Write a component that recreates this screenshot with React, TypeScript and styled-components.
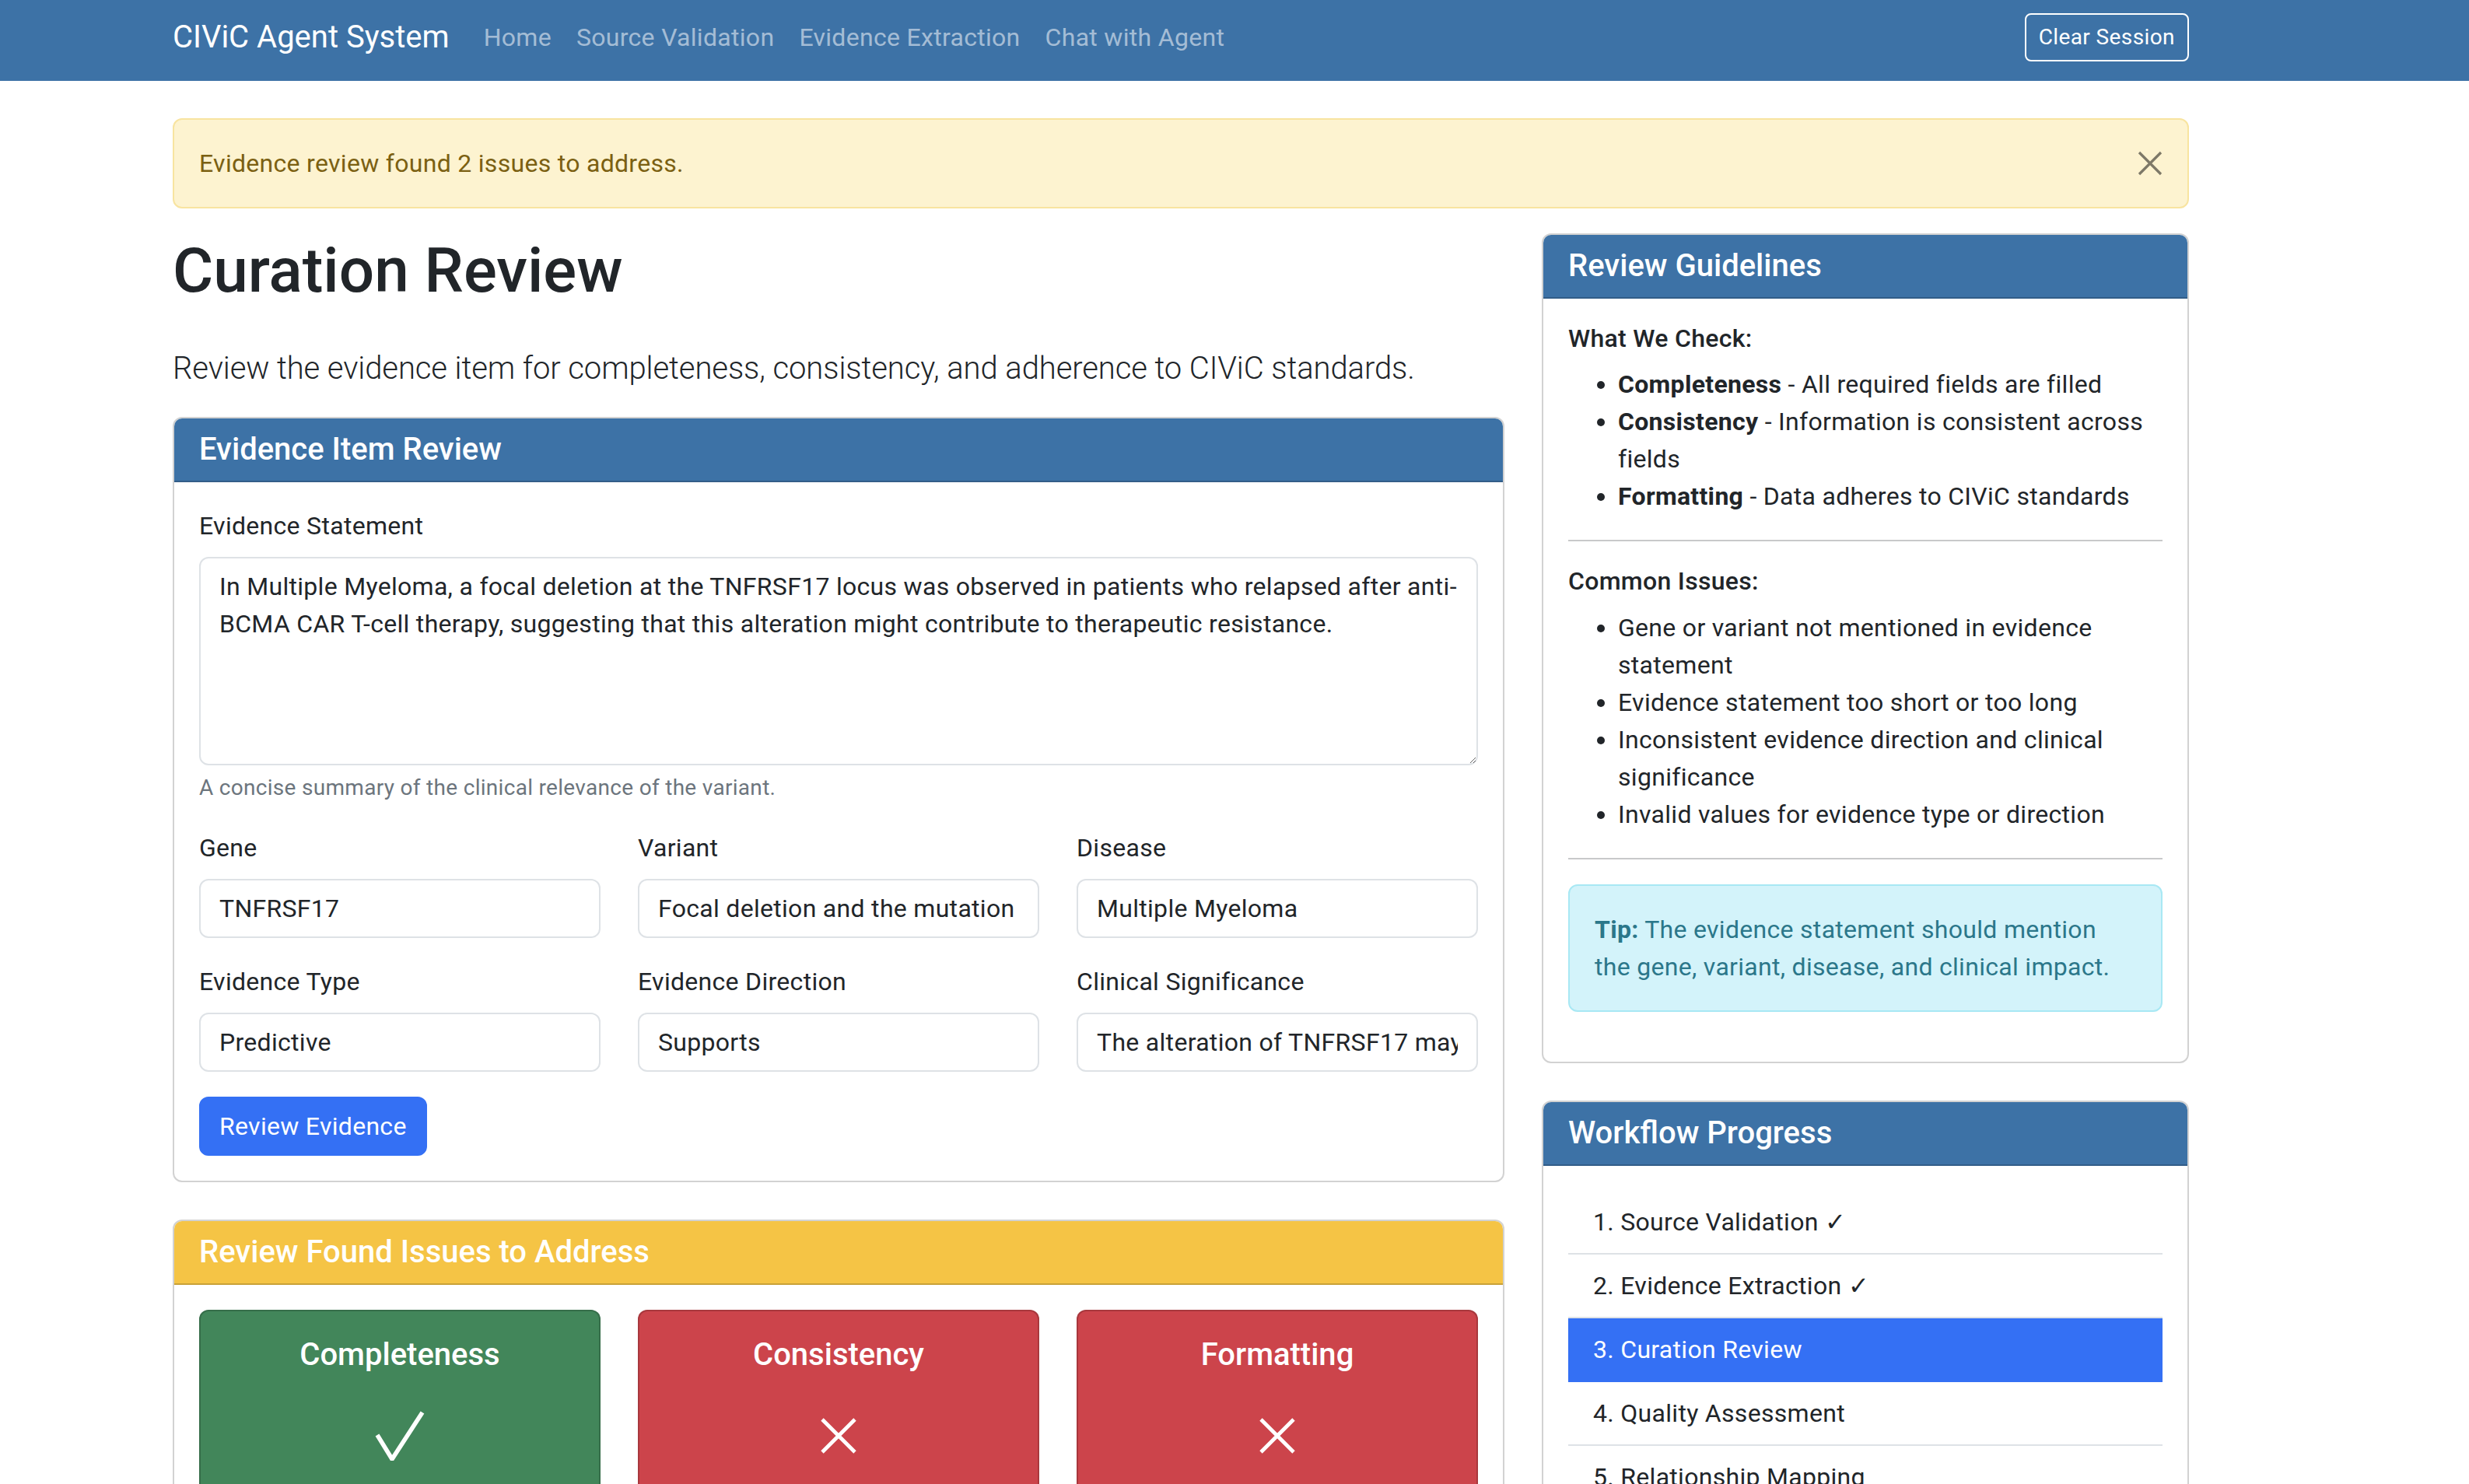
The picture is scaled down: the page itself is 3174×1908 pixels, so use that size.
import React from 'react';
import styled, { createGlobalStyle, css } from 'styled-components';

const GlobalStyle = createGlobalStyle`
  body {
    margin: 0;
    zoom: 2;
    background: #fff;
    color: #212529;
    font-family: Roboto, "Liberation Sans", "Noto Sans", sans-serif;
    font-size: 16px;
    line-height: 1.5;
    letter-spacing: 0.15px;
  }
  * { box-sizing: border-box; }
`;

const BLUE_HEADER = '#3d72a6';
const PRIMARY = '#3470f4';

const Navbar = styled.nav`
  background: ${BLUE_HEADER};
  height: 52px;
  display: flex;
  align-items: center;
  padding-bottom: 4px;
`;

const NavInner = styled.div`
  width: 1296px;
  margin-left: 111px;
  display: flex;
  align-items: center;
`;

const Brand = styled.a`
  font-size: 20px;
  line-height: 30px;
  letter-spacing: 0;
  color: #fff;
  margin-right: 14px;
  text-decoration: none;
`;

const NavLink = styled.a`
  color: rgba(255, 255, 255, 0.55);
  padding: 8px;
  font-size: 16px;
  line-height: 24px;
  text-decoration: none;
`;

const ClearButton = styled.button`
  margin-left: auto;
  font-family: inherit;
  font-size: 14px;
  line-height: 21px;
  letter-spacing: 0.2px;
  padding: 4px 8px;
  border: 1px solid #fff;
  border-radius: 4px;
  background: transparent;
  color: #fff;
`;

const Page = styled.main`
  width: 1296px;
  margin: 24px 0 0 111px;
`;

const Alert = styled.div<{ $tone: 'warning' | 'info' }>`
  display: flex;
  align-items: center;
  justify-content: space-between;
  padding: 16px;
  border-radius: 6px;
  margin-bottom: 16px;
  ${({ $tone }) =>
    $tone === 'warning'
      ? css`
          background: #fdf3d0;
          border: 1px solid #f8e4a0;
          color: #7b6012;
        `
      : css`
          background: #d3f3fa;
          border: 1px solid #a8e8f4;
          color: #2b778a;
        `}
`;

const CloseButton = styled.button`
  background: none;
  border: none;
  padding: 0;
  width: 16px;
  height: 16px;
  display: flex;
  align-items: center;
  justify-content: center;
  opacity: 0.5;
`;

const Columns = styled.div`
  display: grid;
  grid-template-columns: 856px 416px;
  column-gap: 24px;
  align-items: start;
`;

const Title = styled.h1`
  margin: 0 0 24px;
  font-size: 40px;
  font-weight: 500;
  line-height: 1.2;
  letter-spacing: 0;
`;

const Lead = styled.p`
  margin: 0 0 16px;
  font-size: 20px;
  font-weight: 300;
  line-height: 30px;
  letter-spacing: -0.05px;
`;

const Card = styled.section`
  background: #fff;
  border: 1px solid rgba(0, 0, 0, 0.175);
  border-radius: 6px;
  overflow: hidden;
  margin-bottom: 24px;
`;

const CardHeader = styled.div<{ $tone?: 'primary' | 'warning' }>`
  background: ${({ $tone }) => ($tone === 'warning' ? '#f5c445' : BLUE_HEADER)};
  border-bottom: 1px solid rgba(0, 0, 0, 0.175);
  padding: 8px 16px;
  color: #fff;

  h5 {
    margin: 0;
    font-size: 20px;
    font-weight: 500;
    line-height: 24px;
    letter-spacing: 0;
  }
`;

const CardBody = styled.div`
  padding: 16px;
`;

const FieldGroup = styled.div`
  margin-bottom: 16px;
`;

const Label = styled.label`
  display: block;
  margin-bottom: 8px;
  font-size: 16px;
  line-height: 24px;
`;

const TextArea = styled.textarea`
  display: block;
  width: 100%;
  padding: 6px 12px;
  font-family: inherit;
  font-size: 16px;
  line-height: 24px;
  letter-spacing: 0.15px;
  color: #212529;
  border: 1px solid #dee2e6;
  border-radius: 6px;
  resize: vertical;
`;

const Help = styled.div`
  margin-top: 4px;
  font-size: 14px;
  line-height: 21px;
  color: #6c757d;
`;

const Grid3 = styled.div`
  display: grid;
  grid-template-columns: repeat(3, minmax(0, 1fr));
  column-gap: 24px;
`;

const Input = styled.input`
  display: block;
  width: 100%;
  height: 38px;
  padding: 6px 12px;
  font-family: inherit;
  font-size: 16px;
  line-height: 24px;
  letter-spacing: 0.15px;
  color: #212529;
  border: 1px solid #dee2e6;
  border-radius: 6px;
`;

const PrimaryButton = styled.button`
  font-family: inherit;
  font-size: 16px;
  line-height: 24px;
  letter-spacing: 0.15px;
  padding: 6px 12px;
  color: #fff;
  background: ${PRIMARY};
  border: 1px solid ${PRIMARY};
  border-radius: 6px;
`;

const IssueCard = styled.div<{ $ok: boolean }>`
  background: ${({ $ok }) => ($ok ? '#42865a' : '#cc444b')};
  border: 1px solid rgba(0, 0, 0, 0.175);
  border-radius: 6px;
  color: #fff;
  padding: 16px;
  text-align: center;
  min-height: 160px;

  h5 {
    margin: 0 0 8px;
    font-size: 20px;
    font-weight: 500;
    line-height: 24px;
    letter-spacing: 0;
  }
`;

const IssueIcon = styled.div`
  height: 64px;
  display: flex;
  align-items: center;
  justify-content: center;
`;

const SubTitle = styled.h6`
  margin: 0 0 8px;
  font-size: 16px;
  font-weight: 500;
  line-height: 1.2;
`;

const BulletList = styled.ul`
  margin: 0 0 16px;
  padding-left: 32px;

  li {
    line-height: 24px;
  }
`;

const Divider = styled.hr`
  margin: 16px 0;
  border: 0;
  border-top: 1px solid #c8c9ca;
`;

const StepList = styled.ul`
  list-style: none;
  margin: 0;
  padding: 0;
`;

const StepItem = styled.li<{ $active?: boolean }>`
  padding: 8px 16px;
  line-height: 24px;
  border-bottom: 1px solid #dee2e6;
  ${({ $active }) =>
    $active &&
    css`
      background: ${PRIMARY};
      border-color: ${PRIMARY};
      color: #fff;
    `}
`;

const CheckIcon = () => (
  <svg width="32" height="32" viewBox="0 0 32 32" fill="none">
    <path d="M1.5 15.5 L11 31 L30.5 1" stroke="#fff" strokeWidth="2.8" strokeLinejoin="miter" />
  </svg>
);

const CrossIcon = () => (
  <svg width="24" height="24" viewBox="0 0 24 24" fill="none">
    <path d="M1.5 1.5 L22.5 22.5 M22.5 1.5 L1.5 22.5" stroke="#fff" strokeWidth="2.4" />
  </svg>
);

const issues = [
  { name: 'Completeness', ok: true },
  { name: 'Consistency', ok: false },
  { name: 'Formatting', ok: false },
];

const steps = [
  '1. Source Validation ✓',
  '2. Evidence Extraction ✓',
  '3. Curation Review',
  '4. Quality Assessment',
  '5. Relationship Mapping',
];

const statement =
  'In Multiple Myeloma, a focal deletion at the TNFRSF17 locus was observed in patients who relapsed after anti-BCMA CAR T-cell therapy, suggesting that this alteration might contribute to therapeutic resistance.';

export default function App() {
  return (
    <>
      <GlobalStyle />
      <Navbar>
        <NavInner>
          <Brand href="#">CIViC Agent System</Brand>
          <NavLink href="#">Home</NavLink>
          <NavLink href="#">Source Validation</NavLink>
          <NavLink href="#">Evidence Extraction</NavLink>
          <NavLink href="#">Chat with Agent</NavLink>
          <ClearButton>Clear Session</ClearButton>
        </NavInner>
      </Navbar>

      <Page>
        <Alert $tone="warning">
          <span>Evidence review found 2 issues to address.</span>
          <CloseButton aria-label="Close">
            <svg width="16" height="16" viewBox="0 0 16 16">
              <path d="M1 1 L15 15 M15 1 L1 15" stroke="#000" strokeWidth="1.6" />
            </svg>
          </CloseButton>
        </Alert>

        <Columns>
          <div>
            <Title>Curation Review</Title>
            <Lead>Review the evidence item for completeness, consistency, and adherence to CIViC standards.</Lead>

            <Card>
              <CardHeader>
                <h5>Evidence Item Review</h5>
              </CardHeader>
              <CardBody>
                <FieldGroup>
                  <Label>Evidence Statement</Label>
                  <TextArea rows={5} defaultValue={statement} />
                  <Help>A concise summary of the clinical relevance of the variant.</Help>
                </FieldGroup>
                <Grid3>
                  <FieldGroup>
                    <Label>Gene</Label>
                    <Input defaultValue="TNFRSF17" />
                  </FieldGroup>
                  <FieldGroup>
                    <Label>Variant</Label>
                    <Input defaultValue="Focal deletion and the mutation" />
                  </FieldGroup>
                  <FieldGroup>
                    <Label>Disease</Label>
                    <Input defaultValue="Multiple Myeloma" />
                  </FieldGroup>
                  <FieldGroup>
                    <Label>Evidence Type</Label>
                    <Input defaultValue="Predictive" />
                  </FieldGroup>
                  <FieldGroup>
                    <Label>Evidence Direction</Label>
                    <Input defaultValue="Supports" />
                  </FieldGroup>
                  <FieldGroup>
                    <Label>Clinical Significance</Label>
                    <Input defaultValue="The alteration of TNFRSF17 may contribute to resistance" />
                  </FieldGroup>
                </Grid3>
                <PrimaryButton>Review Evidence</PrimaryButton>
              </CardBody>
            </Card>

            <Card>
              <CardHeader $tone="warning">
                <h5>Review Found Issues to Address</h5>
              </CardHeader>
              <CardBody>
                <Grid3>
                  {issues.map((issue) => (
                    <IssueCard key={issue.name} $ok={issue.ok}>
                      <h5>{issue.name}</h5>
                      <IssueIcon>{issue.ok ? <CheckIcon /> : <CrossIcon />}</IssueIcon>
                    </IssueCard>
                  ))}
                </Grid3>
              </CardBody>
            </Card>
          </div>

          <div>
            <Card>
              <CardHeader>
                <h5>Review Guidelines</h5>
              </CardHeader>
              <CardBody>
                <SubTitle>What We Check:</SubTitle>
                <BulletList>
                  <li>
                    <strong>Completeness</strong> - All required fields are filled
                  </li>
                  <li>
                    <strong>Consistency</strong> - Information is consistent across fields
                  </li>
                  <li>
                    <strong>Formatting</strong> - Data adheres to CIViC standards
                  </li>
                </BulletList>
                <Divider />
                <SubTitle>Common Issues:</SubTitle>
                <BulletList>
                  <li>Gene or variant not mentioned in evidence statement</li>
                  <li>Evidence statement too short or too long</li>
                  <li>Inconsistent evidence direction and clinical significance</li>
                  <li>Invalid values for evidence type or direction</li>
                </BulletList>
                <Divider />
                <Alert $tone="info">
                  <span>
                    <strong>Tip:</strong> The evidence statement should mention the gene, variant, disease, and clinical
                    impact.
                  </span>
                </Alert>
              </CardBody>
            </Card>

            <Card>
              <CardHeader>
                <h5>Workflow Progress</h5>
              </CardHeader>
              <CardBody>
                <StepList>
                  {steps.map((step, i) => (
                    <StepItem key={step} $active={i === 2}>
                      {step}
                    </StepItem>
                  ))}
                </StepList>
              </CardBody>
            </Card>
          </div>
        </Columns>
      </Page>
    </>
  );
}
